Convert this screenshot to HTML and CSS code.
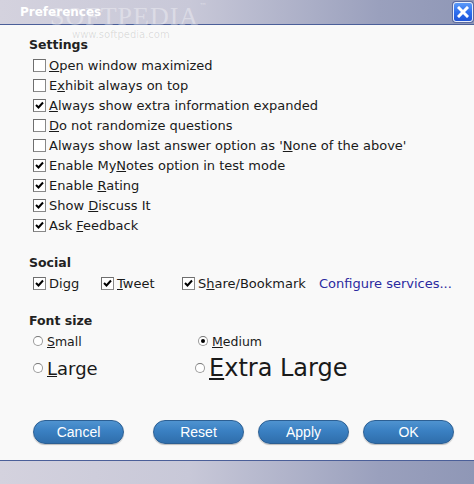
FILE: index.html
```html
<!DOCTYPE html>
<html>
<head>
<meta charset="utf-8">
<link rel="stylesheet" href="styles.css">
</head>
<body>
<div class="window">
  <div class="titlebar">
    <span class="title">Preferences</span>
    <span class="close"><svg width="12" height="12" viewBox="0 0 12 12"><path d="M2 2 L10 10 M10 2 L2 10" stroke="#fff" stroke-width="3" stroke-linecap="square"/></svg></span>
  </div>
  <div class="content">
    <div class="heading">Settings</div>
    <div class="row"><span class="cb"></span><span><u>O</u>pen window maximized</span></div>
    <div class="row"><span class="cb"></span><span>E<u>x</u>hibit always on top</span></div>
    <div class="row"><span class="cb on"><svg width="9" height="9" viewBox="0 0 9 9"><path d="M1 4 L3.5 6.5 L8 1.5" fill="none" stroke="#000" stroke-width="2"/></svg></span><span><u>A</u>lways show extra information expanded</span></div>
    <div class="row"><span class="cb"></span><span><u>D</u>o not randomize questions</span></div>
    <div class="row"><span class="cb"></span><span>Always show last answer option as '<u>N</u>one of the above'</span></div>
    <div class="row"><span class="cb on"><svg width="9" height="9" viewBox="0 0 9 9"><path d="M1 4 L3.5 6.5 L8 1.5" fill="none" stroke="#000" stroke-width="2"/></svg></span><span>Enable My<u>N</u>otes option in test mode</span></div>
    <div class="row"><span class="cb on"><svg width="9" height="9" viewBox="0 0 9 9"><path d="M1 4 L3.5 6.5 L8 1.5" fill="none" stroke="#000" stroke-width="2"/></svg></span><span>Enable <u>R</u>ating</span></div>
    <div class="row"><span class="cb on"><svg width="9" height="9" viewBox="0 0 9 9"><path d="M1 4 L3.5 6.5 L8 1.5" fill="none" stroke="#000" stroke-width="2"/></svg></span><span>Show <u>D</u>iscuss It</span></div>
    <div class="row"><span class="cb on"><svg width="9" height="9" viewBox="0 0 9 9"><path d="M1 4 L3.5 6.5 L8 1.5" fill="none" stroke="#000" stroke-width="2"/></svg></span><span>Ask <u>F</u>eedback</span></div>

    <div class="heading gap">Social</div>
    <div class="row social">
      <span class="item digg"><span class="cb on"><svg width="9" height="9" viewBox="0 0 9 9"><path d="M1 4 L3.5 6.5 L8 1.5" fill="none" stroke="#000" stroke-width="2"/></svg></span><span>Di<u>g</u>g</span></span>
      <span class="item tweet"><span class="cb on"><svg width="9" height="9" viewBox="0 0 9 9"><path d="M1 4 L3.5 6.5 L8 1.5" fill="none" stroke="#000" stroke-width="2"/></svg></span><span><u>T</u>weet</span></span>
      <span class="item share"><span class="cb on"><svg width="9" height="9" viewBox="0 0 9 9"><path d="M1 4 L3.5 6.5 L8 1.5" fill="none" stroke="#000" stroke-width="2"/></svg></span><span>S<u>h</u>are/Bookmark</span></span>
      <span class="link">Configure services...</span>
    </div>

    <div class="heading gap">Font size</div>
    <div class="fonts">
      <div class="ritem"><span class="radio"></span><span class="small"><u>S</u>mall</span></div>
      <div class="ritem col2"><span class="radio on"></span><span class="small"><u>M</u>edium</span></div>
      <div class="ritem big"><span class="radio"></span><span class="large"><u>L</u>arge</span></div>
      <div class="ritem big col2x"><span class="radio"></span><span class="xlarge"><u>E</u>xtra Large</span></div>
    </div>

    <div class="buttons">
      <span class="btn">Cancel</span>
      <span class="btn reset">Reset</span>
      <span class="btn">Apply</span>
      <span class="btn">OK</span>
    </div>
  </div>
  <div class="bottombar"></div>
  <div class="wm1">SOFTPEDIA<sup>™</sup></div>
  <div class="wm2">www.softpedia.com</div>
</div>
</body>
</html>
```
FILE: styles.css
```css
html, body {
  margin: 0;
  padding: 0;
}
body {
  width: 474px;
  height: 484px;
  overflow: hidden;
  background: #f9f9f9;
  font-family: "DejaVu Sans", Verdana, sans-serif;
  font-size: 13px;
  color: #1a1a1a;
}
.window {
  position: relative;
  height: 484px;
  display: flex;
  flex-direction: column;
}
.titlebar {
  height: 24px;
  border-bottom: 1px solid #4b5f99;
  background: linear-gradient(to right, #d4d2de 0%, #c8c8d8 40%, #9aa0bd 80%, #8f97b6 100%);
  display: flex;
  align-items: center;
  justify-content: space-between;
  padding-left: 20px;
  padding-right: 1px;
}
.title {
  color: #fff;
  font-weight: bold;
  font-size: 12px;
}
.close {
  width: 18px;
  height: 18px;
  border: 1px solid #e8eefc;
  border-radius: 3px;
  background: linear-gradient(to bottom, #5b9af8 0%, #2f6fee 50%, #1f55d8 100%);
  display: flex;
  align-items: center;
  justify-content: center;
  box-shadow: 0 0 0 1px #5a6aa0;
}
.content {
  flex: 1;
  padding: 10px 0 0 29px;
  display: flex;
  flex-direction: column;
}
.heading {
  font-weight: bold;
  font-size: 12.5px;
  height: 20px;
  line-height: 20px;
  color: #222;
}
.heading.gap {
  margin-top: 18px;
}
.row {
  height: 20px;
  display: flex;
  align-items: center;
  padding-left: 4px;
}
.cb {
  width: 11px;
  height: 11px;
  border: 1px solid #888;
  border-top-color: #6e6e6e;
  border-left-color: #6e6e6e;
  background: #fff;
  margin-right: 3px;
  display: flex;
  align-items: center;
  justify-content: center;
  flex: none;
}
.cb svg {
  display: block;
}
.item {
  display: flex;
  align-items: center;
}
.digg { width: 68px; }
.tweet { width: 81px; }
.share { width: 137px; }
.link {
  color: #2a2aa0;
}
.fonts {
  display: grid;
  grid-template-columns: 164px auto;
  padding-left: 4px;
}
.ritem {
  display: flex;
  align-items: center;
  height: 20px;
}
.ritem.col2 {
  padding-left: 1px;
}
.ritem.big {
  height: 34px;
}
.ritem.col2x {
  margin-left: -2px;
}
.small {
  font-size: 12.5px;
}
.radio {
  width: 10px;
  height: 10px;
  border-radius: 50%;
  border: 1px solid #9a9a9a;
  border-top-color: #777;
  background: #fff;
  margin-right: 4px;
  box-sizing: border-box;
  flex: none;
  position: relative;
}
.radio.on::after {
  content: "";
  position: absolute;
  left: 2px;
  top: 2px;
  width: 4px;
  height: 4px;
  border-radius: 50%;
  background: #000;
}
.large {
  font-size: 18px;
}
.xlarge {
  font-size: 24px;
}
.buttons {
  display: flex;
  margin-top: 35px;
  padding-left: 4px;
}
.btn {
  width: 91px;
  height: 24px;
  border-radius: 12px;
  box-sizing: border-box;
  background: linear-gradient(to bottom, #4f93d0 0%, #3a80c2 45%, #2f6eab 100%);
  border: 1px solid #2c5f93;
  color: #fff;
  font-family: "Liberation Sans", Arial, sans-serif;
  font-size: 14px;
  display: flex;
  align-items: center;
  justify-content: center;
  margin-right: 14px;
  box-shadow: 0 1px 1px rgba(0,0,0,0.25);
}
.btn.reset {
  margin-left: 15px;
}
.bottombar {
  height: 23px;
  border-top: 1px solid #4b5f99;
  background: linear-gradient(to right, #d4d2de 0%, #c8c8d8 40%, #9aa0bd 80%, #8f97b6 100%);
}
.wm1 {
  position: absolute;
  left: 50px;
  top: 2px;
  font-family: "Liberation Serif", serif;
  font-size: 26px;
  color: rgba(255,255,255,0.35);
  letter-spacing: 1px;
}
.wm1 sup {
  font-size: 8px;
  vertical-align: top;
  font-family: "DejaVu Sans", sans-serif;
}
.wm2 {
  position: absolute;
  left: 72px;
  top: 29px;
  font-size: 10px;
  color: rgba(0,0,0,0.12);
}
```
